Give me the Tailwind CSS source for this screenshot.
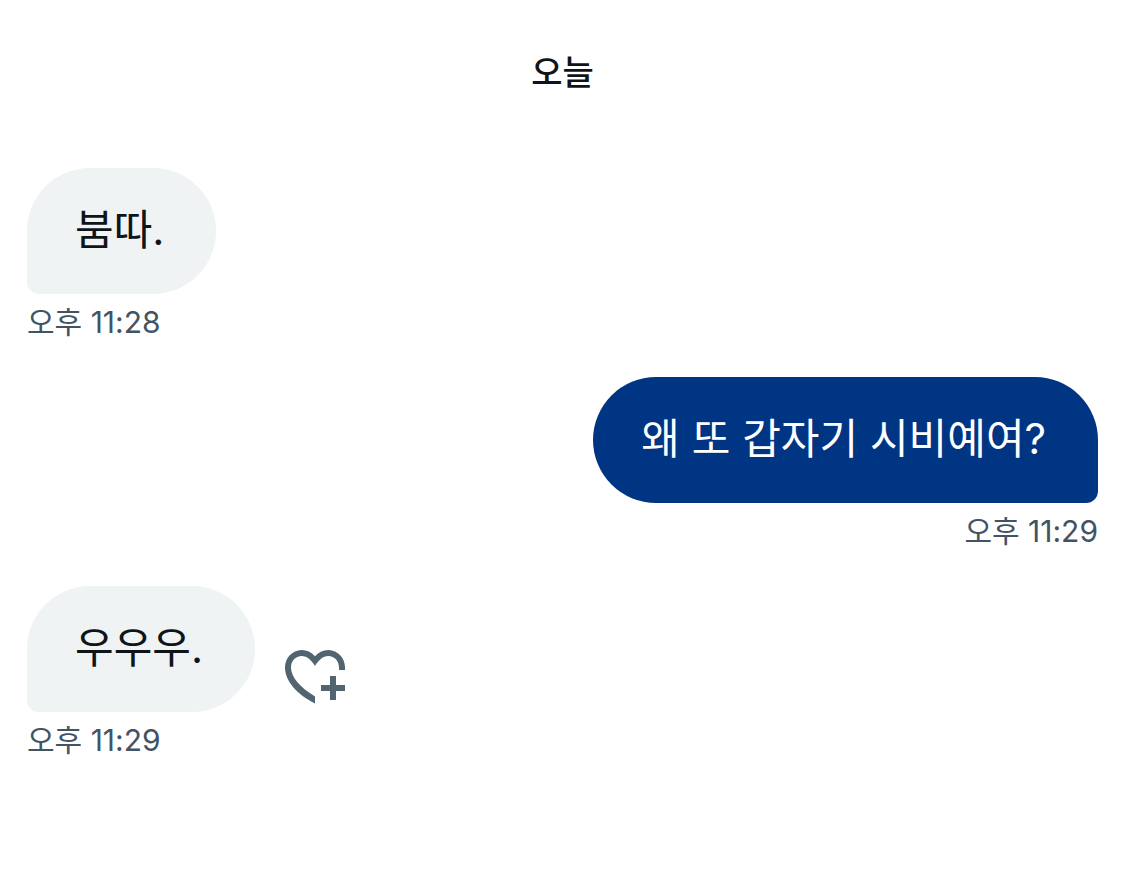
<!DOCTYPE html>
<html lang="ko">
<head>
<meta charset="utf-8">
<meta name="viewport" content="width=device-width, initial-scale=1">
<title>오늘</title>
<script src="https://cdn.jsdelivr.net/npm/@tailwindcss/browser@4"></script>
</head>
<body class="bg-white text-[#0f1419] font-['Inter','Noto_Sans_CJK_KR',sans-serif]">
<main class="flex flex-col px-[27px] pt-[49px]">
  <h1 class="text-center text-[34px] leading-[48px] font-medium">오늘</h1>
  <ol class="mt-[71px] flex flex-col gap-[35px]">
    <li class="flex flex-col items-start">
      <p class="rounded-[63px] rounded-bl-[12px] bg-[#eff3f4] pl-[48px] pr-[52px] pt-[32px] pb-[34px] text-[42px] leading-[60px]">붐따.</p>
      <time class="mt-[8px] text-[30px] leading-[40px] text-[#425364]">오후 11:28</time>
    </li>
    <li class="flex flex-col items-end">
      <p class="rounded-[63px] rounded-br-[12px] bg-[#003584] pl-[48px] pr-[52px] pt-[32px] pb-[34px] text-[42px] leading-[60px] text-white">왜 또 갑자기 시비예여?</p>
      <time class="mt-[8px] text-[30px] leading-[40px] text-[#425364]">오후 11:29</time>
    </li>
    <li class="flex flex-col items-start">
      <div class="flex items-end gap-[24px]">
        <p class="rounded-[63px] rounded-bl-[12px] bg-[#eff3f4] pl-[48px] pr-[52px] pt-[32px] pb-[34px] text-[42px] leading-[60px]">우우우.</p>
        <button type="button" aria-label="반응 추가" class="text-[#536471]">
          <svg class="size-[72px]" viewBox="0 0 24 24" fill="currentColor" aria-hidden="true"><path d="M17 12v3h-3v2h3v3h2v-3h3v-2h-3v-3h-2zM12 5.4C10.700 4.050 9.100 3.300 7.500 3.350C4.400 3.450 2 6 2 9.200C2 13.700 6 18.200 12 21.150V18.800C7.200 16 4 12.500 4 9.200C4 7.050 5.500 5.350 7.600 5.350C9.300 5.350 10.800 6.700 12 8.650C13.200 6.700 14.700 5.350 16.400 5.350C18.500 5.350 20 7.050 20 9.200V10H22V9.200C22 6 19.600 3.450 16.500 3.350C14.900 3.300 13.300 4.050 12 5.400z"/></svg>
        </button>
      </div>
      <time class="mt-[8px] text-[30px] leading-[40px] text-[#425364]">오후 11:29</time>
    </li>
  </ol>
</main>
</body>
</html>
